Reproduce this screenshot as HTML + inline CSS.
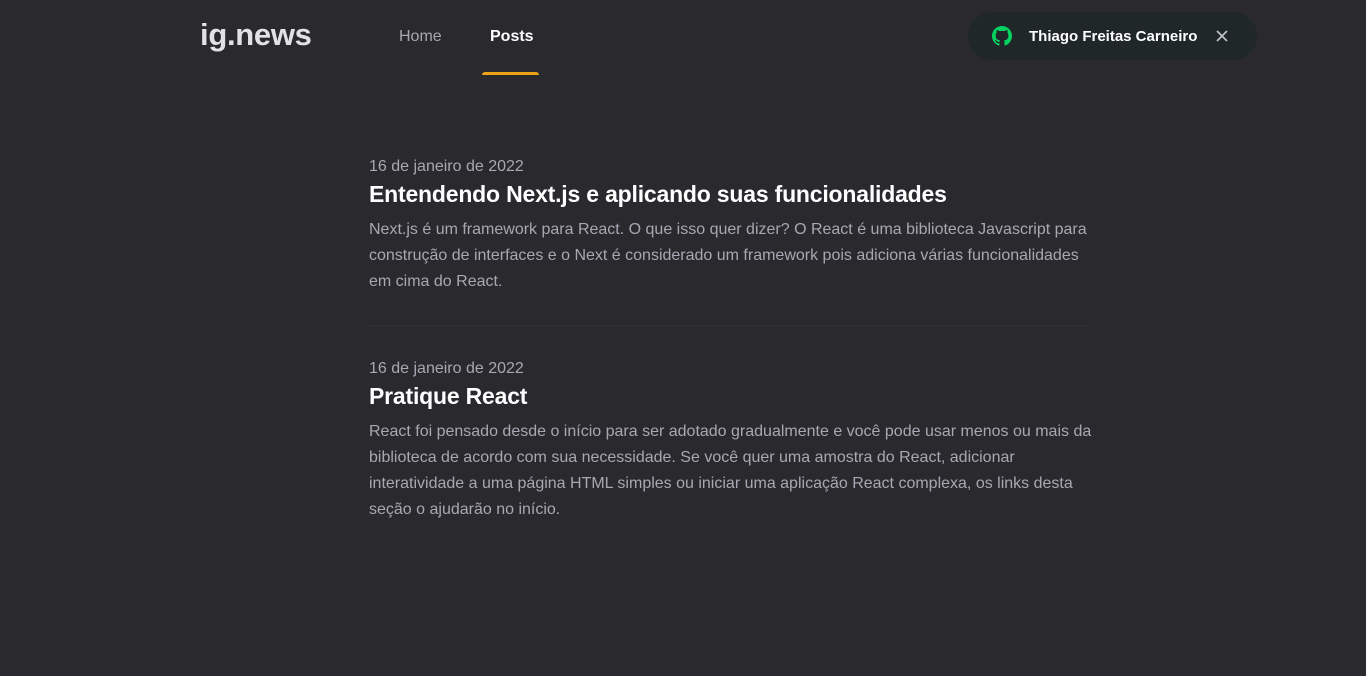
<!DOCTYPE html>
<html><head><meta charset="utf-8"><style>
*{margin:0;padding:0;box-sizing:border-box}
body{background:#29292e;width:1366px;height:676px;overflow:hidden;font-family:"Liberation Sans",sans-serif;color:#e1e1e6}
header{height:76px;position:relative}
.logo{position:absolute;left:200px;top:17px;font-size:31px;font-weight:bold;color:#e1e1e6;letter-spacing:-0.3px}
.nav{position:absolute;top:28px;font-size:16px}
.home{left:399px;color:#a8a8b3}
.posts{left:490px;color:#fff;font-weight:bold}
.ul{position:absolute;left:482px;top:72px;width:57px;height:3px;background:#eba417;border-radius:3px 3px 0 0}
.btn{position:absolute;left:968px;top:12px;width:289px;height:48px;background:#1f2729;border-radius:24px}
.btn svg{position:absolute}
.btn span{position:absolute;left:61px;top:16px;font-size:15px;font-weight:bold;color:#fff;white-space:nowrap}
main{position:absolute;left:369px;top:0;width:720px}
.post{position:absolute;left:0;width:720px;white-space:nowrap}
.date{font-size:16px;color:#a8a8b3;line-height:20px}
h2{font-size:23px;color:#fff;line-height:30px;margin-top:2px;letter-spacing:-0.2px}
p{font-size:16px;color:#a8a8b3;line-height:26px;margin-top:8px}
.hr{position:absolute;left:369px;top:325px;width:720px;height:1px;background:#323238}
</style></head><body>
<header>
<div class="logo">ig.news</div>
<div class="nav home">Home</div>
<div class="nav posts">Posts</div>
<div class="ul"></div>
<div class="btn">
<svg style="left:24px;top:14px" width="20" height="20" viewBox="0 0 16 16"><path fill="#04d361" d="M8 0C3.580 0 0 3.58 0 8c0 3.54 2.29 6.530 5.470 7.59.4.07.55-.17.55-.38 0-.19-.01-.82-.01-1.49-2.010.37-2.53-.49-2.69-.94-.09-.23-.48-.94-.82-1.13-.28-.15-.68-.52-.01-.53.63-.01 1.08.58 1.23.82.72 1.21 1.87.87 2.33.66.07-.52.28-.87.51-1.07-1.78-.2-3.64-.89-3.64-3.95 0-.87.31-1.59.82-2.15-.08-.2-.36-1.02.08-2.12 0 0 .67-.21 2.2.82.64-.18 1.32-.27 2-.27.68 0 1.36.09 2 .27 1.53-1.04 2.2-.82 2.2-.82.44 1.1.16 1.92.08 2.12.51.56.82 1.27.82 2.15 0 3.07-1.870 3.75-3.65 3.95.29.25.54.73.54 1.48 0 1.07-.01 1.93-.01 2.2 0 .21.15.46.55.38A8.013 8.013 0 0016 8c0-4.42-3.58-8-8-8z"/></svg>
<span>Thiago Freitas Carneiro</span>
<svg style="left:248px;top:18px" width="12" height="12" viewBox="0 0 12 12"><path d="M1 1L11 11M11 1L1 11" stroke="#c4c4cc" stroke-width="1.6"/></svg>
</div>
</header>
<main>
<div class="post" style="top:157px">
<div class="date">16 de janeiro de 2022</div>
<h2>Entendendo Next.js e aplicando suas funcionalidades</h2>
<p>Next.js é um framework para React. O que isso quer dizer? O React é uma biblioteca Javascript para<br>construção de interfaces e o Next é considerado um framework pois adiciona várias funcionalidades<br>em cima do React.</p>
</div>
<div class="post" style="top:359px">
<div class="date">16 de janeiro de 2022</div>
<h2>Pratique React</h2>
<p>React foi pensado desde o início para ser adotado gradualmente e você pode usar menos ou mais da<br>biblioteca de acordo com sua necessidade. Se você quer uma amostra do React, adicionar<br>interatividade a uma página HTML simples ou iniciar uma aplicação React complexa, os links desta<br>seção o ajudarão no início.</p>
</div>
</main>
<div class="hr"></div>
</body></html>
